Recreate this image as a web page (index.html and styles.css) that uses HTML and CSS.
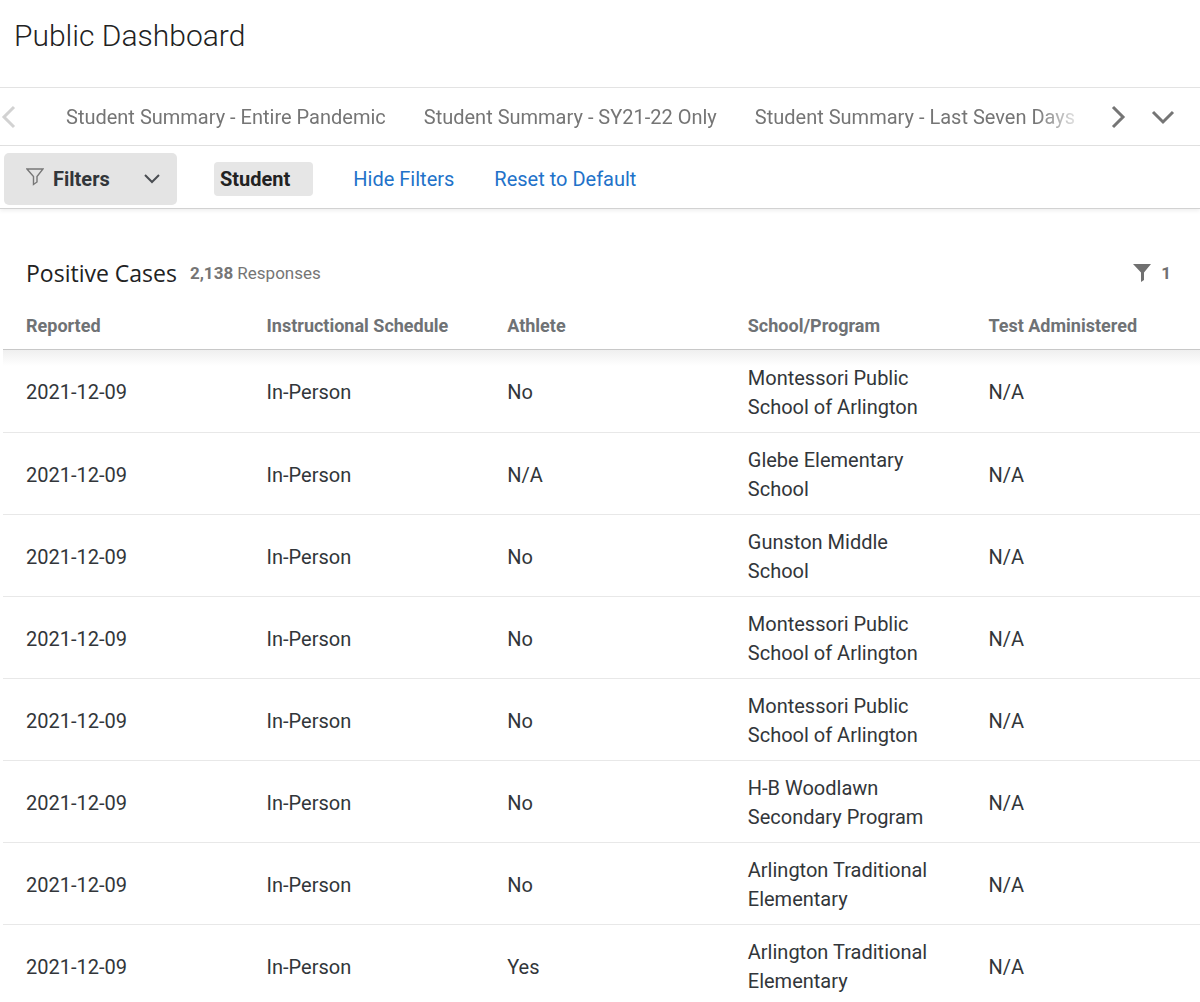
FILE: index.html
```
<!DOCTYPE html>
<html lang="en">
<head>
  <meta charset="utf-8">
  <title>Public Dashboard</title>
  <link rel="stylesheet" href="styles.css">
</head>
<body>

<header class="page-header">
  <h1>Public Dashboard</h1>
</header>

<nav class="tabs">
  <button class="tab-arrow prev" aria-label="Previous pages" disabled>
    <svg width="16" height="26" viewBox="0 0 16 26"><path d="M14 3 L4 13 L14 23"/></svg>
  </button>
  <div class="tab-list">
    <a href="#entire">Student Summary - Entire Pandemic</a>
    <a href="#sy21">Student Summary - SY21-22 Only</a>
    <a href="#week">Student Summary - Last Seven Days</a>
  </div>
  <button class="tab-arrow next" aria-label="Next pages">
    <svg width="16" height="26" viewBox="0 0 16 26"><path d="M3 3 L13 13 L3 23"/></svg>
  </button>
  <button class="tab-arrow more" aria-label="All pages">
    <svg width="26" height="16" viewBox="0 0 26 16"><path d="M3 3 L13 13 L23 3"/></svg>
  </button>
</nav>

<div class="filter-bar">
  <button class="filters-button">
    <svg class="funnel" width="18" height="18" viewBox="0 0 18 18"><path d="M1 1 H17 L11 8.5 V14 L7.5 16.5 V8.5 Z"/></svg>
    <span>Filters</span>
    <svg class="caret" width="16" height="10" viewBox="0 0 16 10"><path d="M1 1 L8 8 L15 1"/></svg>
  </button>
  <button class="filter-chip">Student</button>
  <a href="#hide">Hide Filters</a>
  <a href="#reset">Reset to Default</a>
</div>

<main class="widget">
  <div class="widget-header">
    <h2>Positive Cases</h2>
    <p class="responses"><b>2,138</b> Responses</p>
    <button class="widget-filter" aria-label="1 filter applied">
      <svg width="18" height="18" viewBox="0 0 18 18"><path d="M0 0 H18 L11 8.5 V16 L8 18 V8.5 Z"/></svg>
      <span>1</span>
    </button>
  </div>

  <table class="cases">
    <thead>
      <tr>
        <th>Reported</th>
        <th>Instructional Schedule</th>
        <th>Athlete</th>
        <th>School/Program</th>
        <th>Test Administered</th>
      </tr>
    </thead>
    <tbody>
      <tr>
        <td>2021-12-09</td>
        <td>In-Person</td>
        <td>No</td>
        <td>Montessori Public School of Arlington</td>
        <td>N/A</td>
      </tr>
      <tr>
        <td>2021-12-09</td>
        <td>In-Person</td>
        <td>N/A</td>
        <td>Glebe Elementary School</td>
        <td>N/A</td>
      </tr>
      <tr>
        <td>2021-12-09</td>
        <td>In-Person</td>
        <td>No</td>
        <td>Gunston Middle School</td>
        <td>N/A</td>
      </tr>
      <tr>
        <td>2021-12-09</td>
        <td>In-Person</td>
        <td>No</td>
        <td>Montessori Public School of Arlington</td>
        <td>N/A</td>
      </tr>
      <tr>
        <td>2021-12-09</td>
        <td>In-Person</td>
        <td>No</td>
        <td>Montessori Public School of Arlington</td>
        <td>N/A</td>
      </tr>
      <tr>
        <td>2021-12-09</td>
        <td>In-Person</td>
        <td>No</td>
        <td>H-B Woodlawn Secondary Program</td>
        <td>N/A</td>
      </tr>
      <tr>
        <td>2021-12-09</td>
        <td>In-Person</td>
        <td>No</td>
        <td>Arlington Traditional Elementary</td>
        <td>N/A</td>
      </tr>
      <tr>
        <td>2021-12-09</td>
        <td>In-Person</td>
        <td>Yes</td>
        <td>Arlington Traditional Elementary</td>
        <td>N/A</td>
      </tr>
    </tbody>
  </table>
</main>

</body>
</html>
```
FILE: styles.css
```
* {
  box-sizing: border-box;
}

body {
  margin: 0;
  background: #fff;
  color: #32363a;
  font-family: Roboto, "Liberation Sans", sans-serif;
  font-size: 20px;
}

h1, h2, p {
  margin: 0;
}

button {
  padding: 0;
  border: 0;
  background: none;
  color: inherit;
  font: inherit;
}

a {
  color: #2272c9;
  text-decoration: none;
}

svg {
  display: block;
  fill: none;
}

.page-header {
  padding: 16px 14px 31px;
}

h1 {
  color: #222;
  font-size: 30px;
  font-weight: 300;
  line-height: 40px;
}

/* page tabs */
.tabs {
  display: flex;
  align-items: center;
  height: 59px;
  border-top: 1px solid #e3e3e3;
  border-bottom: 1px solid #dedede;
}

.tab-list {
  display: flex;
  flex: 1;
  gap: 38px;
  min-width: 0;
  margin-left: 50px;
  overflow: hidden;
  line-height: 30px;
  white-space: nowrap;
  -webkit-mask-image: linear-gradient(to left, transparent, #000 50px);
  mask-image: linear-gradient(to left, transparent, #000 50px);
}

.tab-list a {
  color: #757575;
}

.tab-arrow path {
  stroke: #757575;
  stroke-width: 3;
}

.tab-arrow.prev path {
  stroke: #d2d2d2;
}

.tab-arrow.next {
  margin-left: 24px;
}

.tab-arrow.more {
  margin: 0 24px;
}

/* filters */
.filter-bar {
  display: flex;
  align-items: center;
  gap: 40px;
  height: 63px;
  padding: 4px 4px 0;
  border-bottom: 1px solid #d2d2d2;
  box-shadow: 0 2px 4px #f0f0f0;
}

.filters-button {
  display: flex;
  align-items: center;
  width: 173px;
  height: 52px;
  padding: 0 17px 0 22px;
  border-radius: 5px;
  background: #e4e4e4;
  font-weight: 700;
}

.funnel {
  margin: 0 9px 4px 0;
  stroke: #777;
  stroke-width: 1.4;
}

.caret {
  margin-left: auto;
  stroke: #4a4d52;
  stroke-width: 2;
}

.filter-chip {
  height: 34px;
  margin-left: -3px;
  padding: 0 23px 0 6px;
  border-radius: 4px;
  background: #e6e6e6;
  color: #222;
  font-weight: 700;
}

/* record table widget */
.widget {
  padding: 48px 0 0 3px;
  overflow: hidden;
}

.widget-header {
  display: flex;
  align-items: center;
  height: 32px;
  padding: 0 29px 0 23px;
}

h2 {
  color: #222;
  font-family: "Open Sans", sans-serif;
  font-size: 23px;
  font-weight: 400;
}

.responses {
  margin-left: 13px;
  color: #757575;
  font-size: 17px;
}

.widget-filter {
  display: flex;
  align-items: center;
  gap: 10px;
  margin-left: auto;
  color: #707070;
  font-size: 17px;
  font-weight: 700;
}

.widget-filter svg {
  fill: #707070;
}

.cases {
  width: calc(100% + 6px);
  border-collapse: separate;
  border-spacing: 0;
  table-layout: fixed;
  line-height: 29px;
  text-align: left;
}

th {
  height: 61px;
  padding: 12px 0 0 23px;
  border-bottom: 1px solid #c8c8c8;
  color: #6f7275;
  font-size: 18px;
  font-weight: 700;
}

td {
  height: 82px;
  padding: 3px 30px 0 23px;
  border-bottom: 1px solid #e8e8e8;
}

tbody tr:first-child td {
  height: 83px;
  background: linear-gradient(#efefef, #fff 16px);
}
```
